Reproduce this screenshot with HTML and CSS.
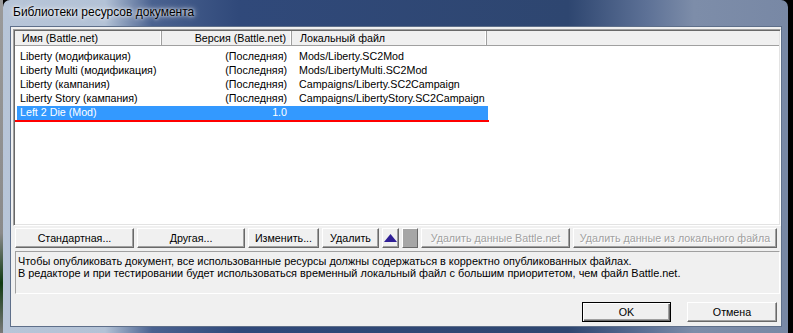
FILE: index.html
```html
<!DOCTYPE html>
<html lang="ru">
<head>
    <meta charset="UTF-8">
    <title>Библиотеки ресурсов документа</title>
    <link rel="stylesheet" href="styles.css">
</head>
<body>
<div class="desk">
    <div class="strip"></div>
    <div class="window">
        <div class="titlebar">Библиотеки ресурсов документа</div>
        <div class="client">
            <div class="list">
                <div class="head">
                    <div class="hc c1">Имя (Battle.net)</div>
                    <div class="hc c2">Версия (Battle.net)</div>
                    <div class="hc c3">Локальный файл</div>
                    <div class="hc c4"></div>
                </div>
                <div class="rows">
                    <div class="row">
                        <div class="cell r1">Liberty (модификация)</div>
                        <div class="cell r2">(Последняя)</div>
                        <div class="cell r3">Mods/Liberty.SC2Mod</div>
                    </div>
                    <div class="row">
                        <div class="cell r1">Liberty Multi (модификация)</div>
                        <div class="cell r2">(Последняя)</div>
                        <div class="cell r3">Mods/LibertyMulti.SC2Mod</div>
                    </div>
                    <div class="row">
                        <div class="cell r1">Liberty (кампания)</div>
                        <div class="cell r2">(Последняя)</div>
                        <div class="cell r3">Campaigns/Liberty.SC2Campaign</div>
                    </div>
                    <div class="row">
                        <div class="cell r1">Liberty Story (кампания)</div>
                        <div class="cell r2">(Последняя)</div>
                        <div class="cell r3">Campaigns/LibertyStory.SC2Campaign</div>
                    </div>
                    <div class="row selected">
                        <div class="cell r1">Left 2 Die (Mod)</div>
                        <div class="cell r2">1.0</div>
                        <div class="cell r3"></div>
                    </div>
                    <div class="mark"></div>
                </div>
            </div>

            <div class="toolbar">
                <button class="btn w1">Стандартная...</button>
                <button class="btn w2">Другая...</button>
                <button class="btn w3">Изменить...</button>
                <button class="btn w4">Удалить</button>
                <button class="btn w5">
                    <svg width="13" height="8" viewBox="0 0 13 8"><polygon points="6.5,0 13,8 0,8" fill="#2f1f96"/></svg>
                </button>
                <button class="btn w6"><span class="square"></span></button>
                <button class="btn w7 disabled">Удалить данные Battle.net</button>
                <button class="btn w8 disabled">Удалить данные из локального файла</button>
            </div>

            <div class="note">
                Чтобы опубликовать документ, все использованные ресурсы должны содержаться в корректно опубликованных файлах.<br>
                В редакторе и при тестировании будет использоваться временный локальный файл с большим приоритетом, чем файл Battle.net.
            </div>

            <div class="footer">
                <button class="btn ok">OK</button>
                <button class="btn cancel">Отмена</button>
            </div>
        </div>
    </div>
</div>
</body>
</html>
```

FILE: styles.css
```css
body {
    margin: 0;
    background: #000;
    font-family: 'Liberation Sans', Arial, sans-serif;
    font-size: 10.7px;
    color: #000;
}

.desk {
    display: flex;
    height: 333px;
    overflow: hidden;
}

.strip {
    width: 3px;
    background: linear-gradient(#9a9a9a, #8a8a8a 70%, #0f3a12 85%, #7a7a7a);
}

.window {
    width: 785px;
    height: 333px;
    box-sizing: border-box;
    padding: 0 6px 6px 7px;
    border-radius: 7px 7px 0 0;
    display: flex;
    flex-direction: column;
    background:
        linear-gradient(90deg, #b7c5d8 0, #b3c2d6 13%, #4a6290 19%, #30497a 30%, #2e4670 72%, #5d7196 82%, #7d8da9 88%, #7888a5 100%);
}

.titlebar {
    height: 26px;
    line-height: 24px;
    padding-left: 3px;
    font-size: 12px;
    color: #000;
    text-shadow: 0 0 6px #fff, 0 0 3px #fff;
}

.client {
    flex: 1;
    background: #f0f0f0;
    border: 1px solid #5e6f8a;
    padding: 2px 0 0 2px;
    display: flex;
    flex-direction: column;
}

.list {
    height: 197px;
    box-sizing: border-box;
    background: #fff;
    border-top: 1px solid #a0a0a0;
    border-left: 1px solid #a0a0a0;
    border-right: 1px solid #fff;
    border-bottom: 1px solid #fff;
    box-shadow: inset 1px 1px 0 #696969, inset -1px -1px 0 #e3e3e3;
    padding: 1px;
}

.head {
    display: flex;
    height: 14px;
    line-height: 15px;
    background: #f0f0f0;
    border-bottom: 1px solid #a0a0a0;
}

.hc {
    box-sizing: border-box;
    border-right: 1px solid #a0a0a0;
    box-shadow: inset -1px 0 0 #fff;
    white-space: nowrap;
}

.c1 { width: 147px; padding-left: 7px; }
.c2 { width: 130px; padding-right: 5px; text-align: right; }
.c3 { width: 195px; padding-left: 8px; }
.c4 { flex: 1; border-right: none; box-shadow: none; }

.rows {
    padding: 4px 0 0 2px;
}

.row {
    display: flex;
    width: 471px;
    height: 14px;
    line-height: 13px;
}

.cell {
    box-sizing: border-box;
    white-space: nowrap;
}

.r1 { width: 145px; padding-left: 3px; }
.r2 { width: 130px; padding-right: 5px; text-align: right; }
.r3 { width: 196px; padding-left: 7px; }

.selected {
    background: #3399ff;
    color: #fff;
}

.mark {
    width: 474px;
    height: 2px;
    margin-left: -2px;
    background: #ff0000;
}

.toolbar {
    display: flex;
    gap: 3px;
    margin: 2px 0 0 2px;
    height: 20px;
}

.btn {
    box-sizing: border-box;
    height: 20px;
    padding: 0;
    font-family: 'Liberation Sans', Arial, sans-serif;
    font-size: 10.7px;
    color: #000;
    background: #f0f0f0;
    border-top: 1px solid #fff;
    border-left: 1px solid #fff;
    border-right: 1px solid #696969;
    border-bottom: 1px solid #696969;
    box-shadow: inset -1px -1px 0 #a0a0a0;
    display: flex;
    align-items: center;
    justify-content: center;
    white-space: nowrap;
}

.w1 { width: 119px; }
.w2 { width: 108px; }
.w3 { width: 71px; }
.w4 { width: 57px; }
.w5 { width: 17px; }
.w6 { width: 16px; }
.w7 { width: 149px; }
.w8 { width: 204px; }

.square {
    width: 14px;
    height: 18px;
    background: #a6a6a6;
}

.disabled {
    color: #a0a0a0;
    text-shadow: 1px 1px 0 #fff;
}

.note {
    margin: 3px 1px 0 2px;
    height: 43px;
    box-sizing: border-box;
    padding: 3px 2px;
    font-size: 10.9px;
    line-height: 12px;
    border-top: 1px solid #a0a0a0;
    border-left: 1px solid #a0a0a0;
    border-right: 1px solid #fff;
    border-bottom: 1px solid #fff;
    white-space: nowrap;
}

.footer {
    display: flex;
    justify-content: flex-end;
    gap: 16px;
    padding: 8px 4px 0 0;
}

.ok {
    width: 89px;
    border: 1px solid #000;
    box-shadow: inset 1px 1px 0 #fff, inset -1px -1px 0 #696969, inset -2px -2px 0 #a0a0a0;
}

.cancel {
    width: 90px;
}
```
